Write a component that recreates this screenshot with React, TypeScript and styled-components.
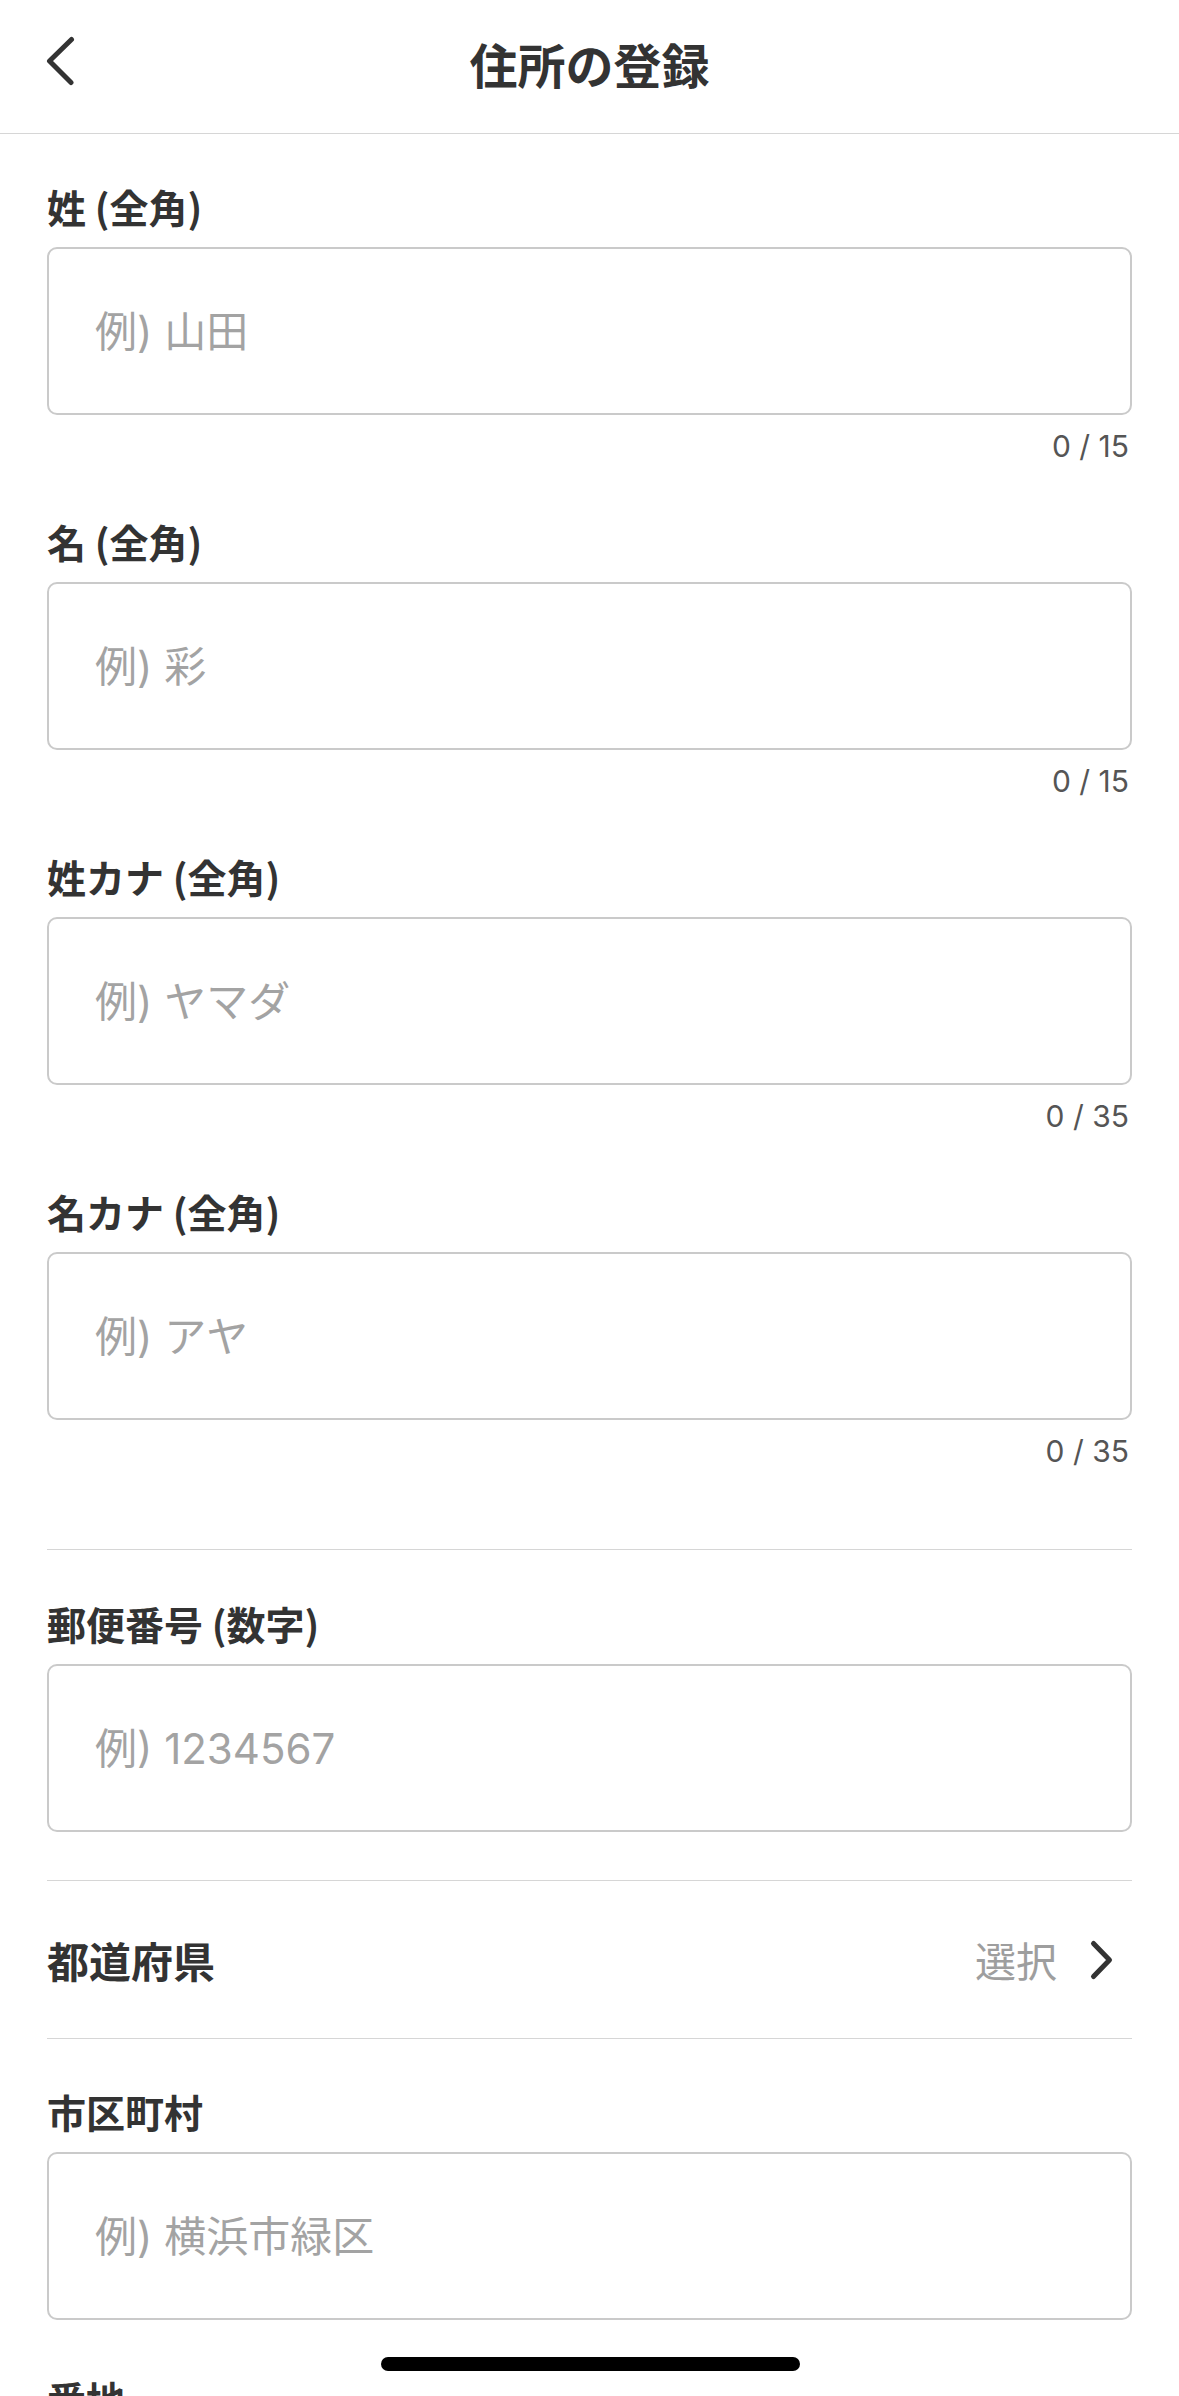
import React from "react";
import styled, { createGlobalStyle } from "styled-components";

const GlobalStyle = createGlobalStyle`
  html, body {
    margin: 0;
    padding: 0;
    background: #ffffff;
  }
  body {
    font-family: "Noto Sans CJK JP", "Noto Sans", sans-serif;
    color: #333333;
    -webkit-font-smoothing: antialiased;
  }
  * { box-sizing: border-box; }
`;

const Screen = styled.div`
  width: 1179px;
  min-height: 2396px;
  background: #ffffff;
`;

const Header = styled.header`
  display: grid;
  grid-template-columns: 1fr auto 1fr;
  align-items: center;
  height: 134px;
  padding-bottom: 7px;
  border-bottom: 1px solid #d6d6d6;
`;

const BackButton = styled.button`
  justify-self: start;
  align-self: start;
  margin: 34px 0 0 44px;
  padding: 0;
  border: none;
  background: none;
  display: flex;
  cursor: pointer;
`;

const Title = styled.h1`
  margin: 0;
  font-size: 48px;
  line-height: 1.3;
  font-weight: 700;
  color: #333333;
  letter-spacing: 0;
`;

const Form = styled.main`
  display: flex;
  flex-direction: column;
  padding: 0 47px;
`;

const Field = styled.section<{ $top: number }>`
  display: flex;
  flex-direction: column;
  margin-top: ${(p) => p.$top}px;
`;

const Label = styled.label`
  font-size: 39px;
  line-height: 56px;
  font-weight: 700;
  color: #333333;
`;

const Input = styled.input`
  margin-top: 13px;
  height: 168px;
  width: 100%;
  border: 2px solid #cacaca;
  border-radius: 10px;
  padding: 0 46px;
  font-family: "Inter", "Noto Sans CJK JP", sans-serif;
  font-size: 42px;
  color: #333333;
  background: #ffffff;
  outline: none;
  &::placeholder {
    color: #a3a3a3;
  }
`;

const Counter = styled.div`
  margin-top: 13px;
  font-family: "Inter", "Noto Sans CJK JP", sans-serif;
  font-size: 30px;
  line-height: 36px;
  text-align: right;
  color: #555555;
  padding-right: 3px;
`;

const Divider = styled.hr<{ $top: number }>`
  margin: ${(p) => p.$top}px 0 0;
  border: none;
  border-top: 1px solid #d6d6d6;
  height: 0;
`;

const SelectRow = styled.div`
  display: flex;
  align-items: center;
  justify-content: space-between;
  height: 157px;
`;

const RowLabel = styled.span`
  font-size: 42px;
  font-weight: 700;
  color: #333333;
  line-height: 1;
`;

const RowValue = styled.span`
  display: flex;
  align-items: center;
  gap: 32px;
  padding-right: 17px;
  font-size: 41px;
  line-height: 1;
  color: #9e9e9e;
`;

const HomeIndicator = styled.div`
  position: fixed;
  left: 50%;
  bottom: 25px;
  width: 419px;
  height: 14px;
  margin-left: -209px;
  border-radius: 7px;
  background: #000000;
`;

const BackIcon = () => (
  <svg width="32" height="52" viewBox="0 0 32 52" fill="none">
    <path
      d="M27.5 5.5 L5.5 27 L27 48.5"
      stroke="#333333"
      strokeWidth="5"
      strokeLinecap="round"
      strokeLinejoin="round"
    />
  </svg>
);

const ChevronRight = () => (
  <svg width="26" height="44" viewBox="0 0 26 44" fill="none">
    <path
      d="M4.5 5.5 L20.5 22 L4.5 38.5"
      stroke="#333333"
      strokeWidth="5"
      strokeLinecap="round"
      strokeLinejoin="round"
    />
  </svg>
);

type NameField = { label: string; placeholder: string; max: number };

const nameFields: NameField[] = [
  { label: "姓 (全角)", placeholder: "例) 山田", max: 15 },
  { label: "名 (全角)", placeholder: "例) 彩", max: 15 },
  { label: "姓カナ (全角)", placeholder: "例) ヤマダ", max: 35 },
  { label: "名カナ (全角)", placeholder: "例) アヤ", max: 35 },
];

export default function App() {
  return (
    <>
      <GlobalStyle />
      <Screen>
        <Header>
          <BackButton aria-label="戻る">
            <BackIcon />
          </BackButton>
          <Title>住所の登録</Title>
          <span />
        </Header>
        <Form>
          {nameFields.map((f, i) => (
            <Field key={f.label} $top={i === 0 ? 44 : 49}>
              <Label>{f.label}</Label>
              <Input placeholder={f.placeholder} />
              <Counter>0 / {f.max}</Counter>
            </Field>
          ))}
          <Divider $top={80} />
          <Field $top={45}>
            <Label>郵便番号 (数字)</Label>
            <Input placeholder="例) 1234567" inputMode="numeric" />
          </Field>
          <Divider $top={48} />
          <SelectRow>
            <RowLabel>都道府県</RowLabel>
            <RowValue>
              選択
              <ChevronRight />
            </RowValue>
          </SelectRow>
          <Divider $top={0} />
          <Field $top={44}>
            <Label>市区町村</Label>
            <Input placeholder="例) 横浜市緑区" />
          </Field>
          <Field $top={50}>
            <Label>番地</Label>
            <Input placeholder="例) 1-2-3" />
          </Field>
        </Form>
        <HomeIndicator />
      </Screen>
    </>
  );
}
